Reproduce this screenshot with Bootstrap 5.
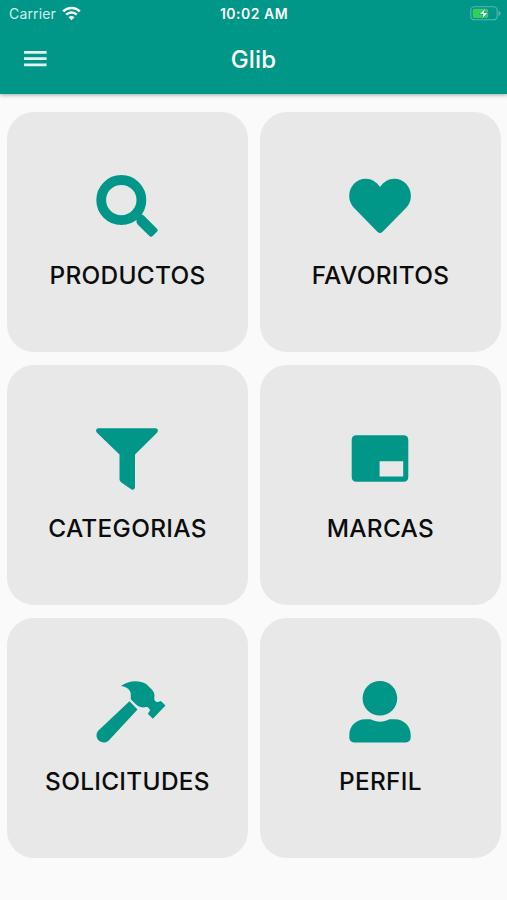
<!DOCTYPE html>
<html lang="es">
<head>
<meta charset="utf-8">
<meta name="viewport" content="width=device-width, initial-scale=1">
<title>Glib</title>
<link href="https://cdn.jsdelivr.net/npm/bootstrap@5.3.0/dist/css/bootstrap.min.css" rel="stylesheet">
<style>
  body { font-family: Inter, "Liberation Sans", sans-serif; background: #fafafa; height: 900px; overflow: hidden; }
  svg { display: block; flex: none; }
  .app-header { background: #009688; height: 94px; box-shadow: 0 1px 4px rgba(0,0,0,.35); }
  .status-bar { height: 27px; font-size: 14px; line-height: 27px; padding: 0 6px 0 9px; }
  .status-bar .side { flex: 1 1 0; gap: 6px; }
  .carrier { color: #d3efec; letter-spacing: .15px; }
  .clock { font-weight: 600; font-size: 14px; letter-spacing: .5px; margin-left: -2px; }
  .title-bar { height: 65px; padding: 0 23.7px; }
  .title-bar .side { flex: 1 1 0; }
  .title-bar h1 { font-size: 24px; font-weight: 550; line-height: 30px; letter-spacing: .2px; padding-top: 1.5px; }
  .menu-btn { color: #e0f5f2; margin-bottom: 2px; }
  .tiles { padding: 18.3px 6.4px 0 7.3px; }
  .tile-grid { --bs-gutter-x: 12.6px; row-gap: 12.7px; }
  .tile { height: 240.2px; border: 0; border-radius: 27px; background: #e8e8e8; color: #009688; padding-top: 52.7px; }
  .tile-label { color: #0c0c0c; font-size: 24.4px; font-weight: 550; line-height: 30px; margin-top: 15.5px; letter-spacing: .3px; white-space: nowrap; }
</style>
</head>
<body>
<header class="app-header position-relative text-white">
  <div class="status-bar d-flex align-items-center">
    <div class="side d-flex align-items-center">
      <span class="carrier">Carrier</span>
      <svg width="19" height="15" viewBox="0 0 19 15" fill="none" stroke="#fff" stroke-width="2.5" aria-hidden="true">
        <path d="M1.2 5.4C5.8.7 13.2.7 17.8 5.4M4.2 8.6c3-2.9 7.6-2.9 10.6 0"/>
        <path d="M9.5 14.2 6.5 11.2c1.7-1.6 4.3-1.6 6 0z" fill="#fff" stroke="none"/>
      </svg>
    </div>
    <span class="clock">10:02 AM</span>
    <div class="side d-flex justify-content-end">
      <svg width="31" height="15" viewBox="0 0 31 15" aria-hidden="true">
        <rect x=".8" y=".8" width="26.4" height="13" rx="3.6" fill="none" stroke="#5ab8af" stroke-width="1.1"/>
        <path d="M28.6 5v4.8c1.6-.6 2-1.4 2-2.4s-.4-1.8-2-2.4z" fill="#5ab8af"/>
        <rect x="2.7" y="2.7" width="15.5" height="9.2" rx="2" fill="#32d058"/>
        <path d="M15.6 1.8 9.2 8.3h3.9l-1.4 5 6.4-6.8h-3.9z" fill="#fff" stroke="#009688" stroke-width=".7"/>
      </svg>
    </div>
  </div>
  <nav class="title-bar d-flex align-items-center" aria-label="Principal">
    <div class="side">
      <button class="menu-btn btn p-0 border-0 d-block" type="button" aria-label="Menú">
        <svg width="23" height="16" viewBox="0 0 23 16" fill="#e0f5f2"><path d="M0 0h22.6v2.7H0zM0 6.3h22.6V9H0zM0 12.5h22.6v2.7H0z"/></svg>
      </button>
    </div>
    <h1 class="mb-0">Glib</h1>
    <div class="side"></div>
  </nav>
</header>

<main class="tiles">
  <div class="row row-cols-2 tile-grid">
    <div class="col">
      <div class="tile card align-items-center">
        <svg width="80" height="80" viewBox="0 0 80 80" fill="currentColor">
          <circle cx="34.3" cy="35.1" r="20.1" fill="none" stroke="currentColor" stroke-width="9.8"/>
          <path d="M48.2 53.8 53.2 49.3Q55.5 49.3 57 50.7L70.2 64Q71.4 65.4 70.2 66.6L65.4 71.3Q64 72.3 62.7 71.2L50.4 59.3Q49 57.5 49.6 55.6z"/>
        </svg>
        <div class="tile-label">PRODUCTOS</div>
      </div>
    </div>
    <div class="col">
      <div class="tile card align-items-center">
        <svg width="80" height="80" viewBox="0 0 80 80" fill="currentColor">
          <path d="M40 22C36.5 16.8 31.6 13.7 26 13.7 16.3 13.7 9.2 21.5 9.2 31c0 5.2 2 9 5.2 12.3L37.4 66.7Q40 69.2 42.6 66.7L65.7 43.3C68.9 40 70.9 36.2 70.9 31c0-9.5-7.1-17.3-16.8-17.3C48.5 13.7 43.5 16.8 40 22z"/>
        </svg>
        <div class="tile-label">FAVORITOS</div>
      </div>
    </div>
    <div class="col">
      <div class="tile card align-items-center">
        <svg width="80" height="80" viewBox="0 0 80 80" fill="currentColor">
          <path d="M11.6 10.3H68.4C70.8 10.3 71.7 13 70 14.8L48 36.6V69.2C48 71.5 45.6 72.4 43.8 71.1L34 64.2Q32.5 63 32.5 61.3V36.6L10 14.8C8.3 13 9.2 10.3 11.6 10.3z"/>
        </svg>
        <div class="tile-label">CATEGORIAS</div>
      </div>
    </div>
    <div class="col">
      <div class="tile card align-items-center">
        <svg width="80" height="80" viewBox="0 0 80 80" fill="currentColor">
          <path fill-rule="evenodd" d="M16.5 17.2H63.5Q68.3 17.2 68.3 22V59Q68.3 63.8 63.5 63.8H16.5Q11.7 63.8 11.7 59V22Q11.7 17.2 16.5 17.2zM39.6 43.2V58.6H63.2V43.2z"/>
        </svg>
        <div class="tile-label">MARCAS</div>
      </div>
    </div>
    <div class="col">
      <div class="tile card align-items-center">
        <svg width="80" height="80" viewBox="0 0 80 80" fill="currentColor">
          <path d="M42.5 30.3 50.5 38.4 22 69.2C18.8 72.4 14.3 72 11.6 69.3 8.9 66.6 8.7 62.2 11.7 59.2z"/>
          <path d="M33.8 15C41.5 9.2 52 8.8 59.2 12.9L64.3 18C67 20.7 68 23.3 67.3 26.5 66.9 28.8 68.5 31.2 71 31.1L73.8 30 78.5 34.6 65.8 47.7 60.8 42.7 63.2 39.2 61.2 36.6C58.7 35.4 57.6 36.7 55 36.3 51.5 35.8 49.5 34 47 31.5L43.8 28.2V23.5C43.8 19 39.6 15.6 33.8 15z"/>
        </svg>
        <div class="tile-label">SOLICITUDES</div>
      </div>
    </div>
    <div class="col">
      <div class="tile card align-items-center">
        <svg width="80" height="80" viewBox="0 0 80 80" fill="currentColor">
          <circle cx="39.9" cy="27.3" r="17.3"/>
          <path d="M25 48.3H30.5C36.5 51.4 43.5 51.4 49.5 48.3H55C63.7 48.3 70.7 55.2 70.7 63.9V66.5C70.7 69.4 68.6 71.4 66 71.4H14C11.4 71.4 9.3 69.4 9.3 66.5V63.9C9.3 55.2 16.3 48.3 25 48.3z"/>
        </svg>
        <div class="tile-label">PERFIL</div>
      </div>
    </div>
  </div>
</main>
<script src="https://cdn.jsdelivr.net/npm/bootstrap@5.3.0/dist/js/bootstrap.bundle.min.js"></script>
</body>
</html>
